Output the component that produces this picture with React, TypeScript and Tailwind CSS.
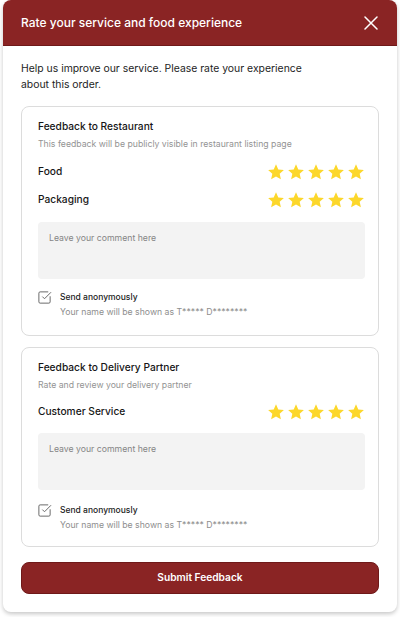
import { useState } from "react";

const FONT = { fontFamily: "Inter, 'Noto Sans', sans-serif" };

function Star() {
  return (
    <svg width="18" height="18" viewBox="0 0 24 24" className="block">
      <path
        d="M12 1.8l3.05 6.9 7.45.75-5.6 5 1.62 7.35L12 18l-6.52 3.8L7.1 14.45l-5.6-5 7.45-.75z"
        fill="#fcd72b"
      />
    </svg>
  );
}

function Stars() {
  return (
    <div className="flex items-center gap-[2px]">
      {[0, 1, 2, 3, 4].map((i) => (
        <Star key={i} />
      ))}
    </div>
  );
}

function CheckIcon() {
  return (
    <svg
      width="15"
      height="15"
      viewBox="0 0 24 24"
      fill="none"
      stroke="#6b6b6b"
      strokeWidth="1.6"
      strokeLinecap="round"
      strokeLinejoin="round"
      className="block"
    >
      <path d="M21 10.656V19a2 2 0 0 1-2 2H5a2 2 0 0 1-2-2V5a2 2 0 0 1 2-2h12.344" />
      <path d="m9 11 3 3L22 4" />
    </svg>
  );
}

function Anonymous() {
  const [on, setOn] = useState(true);
  return (
    <div className="flex items-start gap-[8px]">
      <button onClick={() => setOn(!on)} className="-ml-[1px]">
        <CheckIcon />
      </button>
      <div>
        <div className="text-[8.5px] leading-[14px] font-medium text-[#1c1c1c]">
          Send anonymously
        </div>
        <div className="mt-[1px] text-[8.7px] leading-[14px] text-[#8e8e8e]">
          Your name will be shown as T***** D********
        </div>
      </div>
    </div>
  );
}

function Comment() {
  return (
    <textarea
      placeholder="Leave your comment here"
      className="block w-full h-[57px] resize-none rounded-[4px] bg-[#f3f3f3] px-[11px] py-[10px] text-[8.7px] leading-[13px] text-[#333] placeholder:text-[#858585] outline-none"
    />
  );
}

function Row({ label }: { label: string }) {
  return (
    <div className="flex items-center justify-between h-[18px]">
      <span className="text-[10.2px] font-medium text-[#161616]">{label}</span>
      <Stars />
    </div>
  );
}

export default function App() {
  return (
    <div style={FONT} className="w-[400px] h-[617px] bg-white">
      <div className="mx-[3px] h-[612px] rounded-lg bg-white shadow-[0_2px_4px_rgba(0,0,0,0.22)] overflow-hidden flex flex-col">
        {/* header */}
        <div className="h-[46px] shrink-0 flex items-center justify-between pl-[18px] pr-[19px] bg-[#8a2424] border-b border-[#6f1919]">
          <h1 className="text-[12px] font-medium text-white">
            Rate your service and food experience
          </h1>
          <button className="text-white">
            <svg width="14" height="14" viewBox="0 0 14 14" stroke="currentColor" strokeWidth="1.5" strokeLinecap="round" className="block">
              <path d="M1 1l12 12M13 1L1 13" />
            </svg>
          </button>
        </div>

        <div className="flex-1 px-[18px] pt-[15px]">
          <p className="text-[10.4px] leading-[16px] text-[#1d1d1d] max-w-[290px]">
            Help us improve our service. Please rate your experience about this order.
          </p>

          {/* restaurant */}
          <section className="mt-[13px] rounded-lg border border-[#dcdcdc] pl-4 pr-[13px] pt-[11px] pb-[16px]">
            <h2 className="text-[10.2px] leading-[16px] font-medium text-[#161616]">
              Feedback to Restaurant
            </h2>
            <p className="mt-[3px] text-[8.7px] leading-[14px] text-[#939393]">
              This feedback will be publicly visible in restaurant listing page
            </p>
            <div className="mt-[12px] flex flex-col gap-[10px]">
              <Row label="Food" />
              <Row label="Packaging" />
            </div>
            <div className="mt-[13px]">
              <Comment />
            </div>
            <div className="mt-[11px]">
              <Anonymous />
            </div>
          </section>

          {/* delivery */}
          <section className="mt-[11px] rounded-lg border border-[#dcdcdc] pl-4 pr-[13px] pt-[11px] pb-[14px]">
            <h2 className="text-[10.2px] leading-[16px] font-medium text-[#161616]">
              Feedback to Delivery Partner
            </h2>
            <p className="mt-[3px] text-[8.7px] leading-[14px] text-[#939393]">
              Rate and review your delivery partner
            </p>
            <div className="mt-[11px]">
              <Row label="Customer Service" />
            </div>
            <div className="mt-[12px]">
              <Comment />
            </div>
            <div className="mt-[13px]">
              <Anonymous />
            </div>
          </section>

          <button className="mt-[15px] w-full h-[32px] rounded-lg bg-[#8a2424] border border-[#6f1919] text-white text-[10.2px] font-semibold">
            Submit Feedback
          </button>
        </div>
      </div>
    </div>
  );
}
